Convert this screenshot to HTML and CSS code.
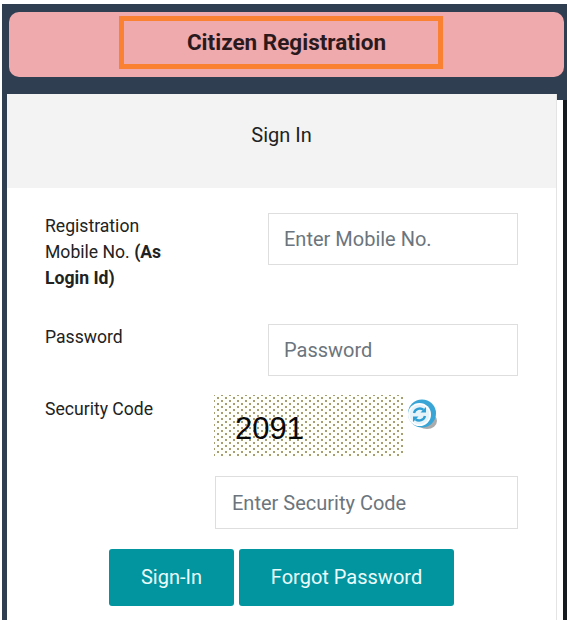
FILE: index.html
```html
<!DOCTYPE html>
<html lang="en">
  <head>
    <meta charset="utf-8" />
    <title>Citizen Registration</title>
    <link rel="stylesheet" href="styles.css">
  </head>
  <body>
    <div class="frame">
      <div class="banner">
        <h1 class="banner-title">Citizen Registration</h1>
      </div>
      <div class="main">
        <div class="card">
          <div class="card-head">Sign In</div>
          <form class="card-body">
            <div class="row row-mobile">
              <label class="label">Registration Mobile No. <b>(As Login Id)</b></label>
              <input class="input" type="text" placeholder="Enter Mobile No.">
            </div>
            <div class="row row-password">
              <label class="label">Password</label>
              <input class="input" type="text" placeholder="Password">
            </div>
            <div class="row row-captcha">
              <label class="label label-captcha">Security Code</label>
              <div class="captcha">2091</div>
              <svg class="refresh" viewBox="0 0 32 32" width="32" height="32">
                <ellipse cx="21" cy="22" rx="10" ry="8" fill="#8f8f8f" opacity="0.75" />
                <circle cx="16" cy="14.500" r="14" fill="#38a5d6" />
                <circle cx="13.500" cy="15.500" r="11.500" fill="#fff" />
                <circle cx="13.500" cy="15.500" r="10" fill="#e6f4fa" />
                <path d="M8 14a6 6 0 0 1 9.500-3.200" fill="none" stroke="#2f9fd3" stroke-width="2.400" />
                <path d="M19 17a6 6 0 0 1-9.500 3.200" fill="none" stroke="#2f9fd3" stroke-width="2.400" />
                <path d="M20 8v5.500h-5.500z" fill="#2f9fd3" />
                <path d="M7 23v-5.500h5.500z" fill="#2f9fd3" />
              </svg>
            </div>
            <div class="row-code">
              <input class="input input-code" type="text" placeholder="Enter Security Code">
            </div>
            <div class="actions">
              <button type="button" class="button button-signin">Sign-In</button>
              <button type="button" class="button button-forgot">Forgot Password</button>
            </div>
          </form>
        </div>
        <div class="edge"></div>
      </div>
    </div>
  </body>
</html>
```

FILE: styles.css
```css
html,
body {
  height: 100%;
}
body {
  margin: 0;
  padding: 4px 0 6px 2px;
  box-sizing: border-box;
  background-color: white;
  font-family: Roboto, sans-serif;
  color: #222;
  overflow: hidden;
}
.frame {
  height: 100%;
  background-color: #2f3e50;
  padding: 8px 0 0 5px;
  box-sizing: border-box;
  display: flex;
  flex-direction: column;
}
.banner {
  margin: 0 3px 0 2px;
  height: 65px;
  background-color: #efaaad;
  border-radius: 10px;
  display: flex;
  justify-content: center;
  align-items: flex-start;
}
.banner-title {
  width: 324px;
  height: 53px;
  margin: 4px 0 0 -11px;
  padding: 0 0 2px 11px;
  box-sizing: border-box;
  border: 5px solid #fb8132;
  display: flex;
  align-items: center;
  justify-content: center;
  font-size: 22.500px;
  font-weight: 700;
  color: #2b1a1d;
}
.main {
  flex: 1;
  margin-top: 17px;
  display: flex;
  min-height: 0;
}
.card {
  flex: 1;
  background-color: white;
  border-right: 1px solid #e4e4e4;
}
.edge {
  width: 6px;
  margin-top: 6px;
  background-color: white;
  border-right: 4px solid #141a20;
}
.card-head {
  height: 94px;
  padding-bottom: 13px;
  box-sizing: border-box;
  background-color: #f3f3f3;
  display: flex;
  align-items: center;
  justify-content: center;
  font-size: 20px;
}
.card-body {
  padding: 25px 38px 0 38px;
  font-size: 17.600px;
  line-height: 26px;
}
.row {
  display: flex;
  justify-content: space-between;
  align-items: flex-start;
}
.row-mobile {
  height: 111px;
}
.row-password {
  height: 71px;
}
.row-captcha {
  height: 81px;
  justify-content: flex-start;
}
.label {
  width: 130px;
}
.label b {
  font-weight: 700;
}
.label-captcha {
  width: 169px;
  padding-top: 1px;
}
.input {
  width: 250px;
  height: 52px;
  box-sizing: border-box;
  border: 1px solid #dedede;
  padding: 0 15px;
  font-family: Roboto, sans-serif;
  font-size: 20px;
  background-color: white;
}
.input::placeholder {
  color: #6c757d;
  opacity: 1;
}
.row-code {
  display: flex;
  justify-content: flex-end;
}
.input-code {
  width: 303px;
  height: 53px;
  padding-left: 16px;
}
.captcha {
  width: 189px;
  height: 62px;
  box-sizing: border-box;
  padding: 6px 0 0 21px;
  display: flex;
  align-items: center;
  font-family: "Liberation Sans", sans-serif;
  font-size: 31px;
  color: #0a0a0a;
  background-color: #fefefb;
  background-image:
    radial-gradient(0.8px 1.600px ellipse, #a89e74 70%, transparent 100%),
    radial-gradient(0.8px 1.600px ellipse, #a89e74 70%, transparent 100%);
  background-size: 8px 6px;
  background-position: 0 0, 4px 3px;
}
.refresh {
  margin: 4px 0 0 3px;
}
.actions {
  display: flex;
  justify-content: center;
  gap: 5px;
  margin: 20px 0 0 0;
}
.button {
  height: 57px;
  padding: 0 0 2px 0;
  border: none;
  border-radius: 3px;
  background-color: #02959f;
  color: #eafcfc;
  font-family: Roboto, sans-serif;
  font-size: 20px;
  cursor: pointer;
}
.button-signin {
  width: 125px;
}
.button-forgot {
  width: 215px;
}
```
